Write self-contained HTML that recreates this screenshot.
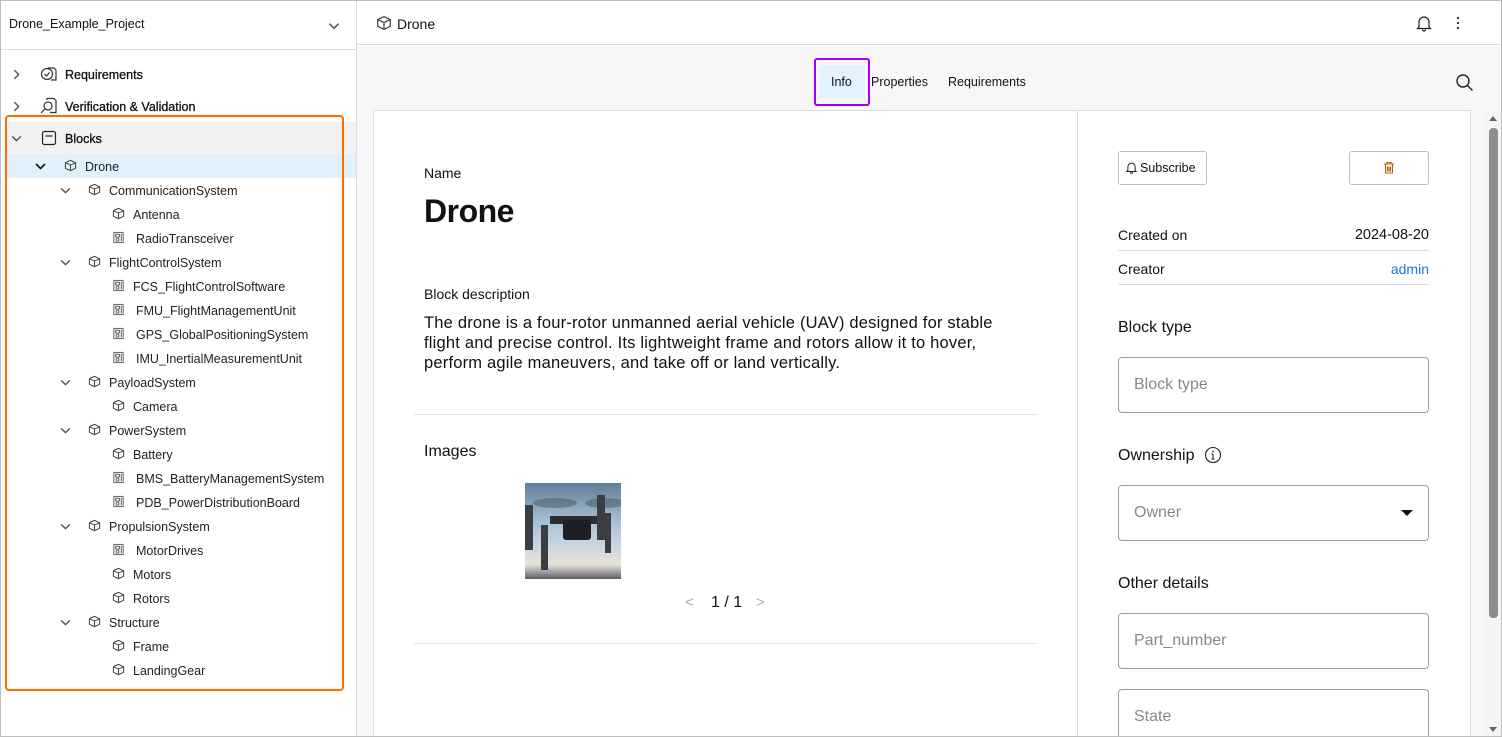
<!DOCTYPE html>
<html><head><meta charset="utf-8"><style>
*{box-sizing:border-box;margin:0;padding:0}
html,body{width:1502px;height:737px;overflow:hidden}
body{font-family:"Liberation Sans",sans-serif;color:#111;background:#fff;position:relative}
.a{position:absolute;white-space:nowrap}
.t{font-size:12.5px;color:#222}
svg{position:absolute}
.in{position:absolute;border:1px solid #9e9e9e;border-radius:4px;background:#fff;color:#888;font-size:16px;padding-left:15px;display:flex;align-items:center}
.r{position:absolute;text-align:right;white-space:nowrap}
</style></head><body>
<svg width="0" height="0" style="position:absolute"><defs>
<symbol id="cube" viewBox="0 0 14 14"><path d="M7 1.5 L12.5 4 V10 L7 12.5 L1.5 10 V4 Z M1.5 4 L7 6.5 L12.5 4 M7 6.5 V12.5" fill="none" stroke="#444" stroke-width="1.1" stroke-linejoin="round"/></symbol>
<symbol id="part" viewBox="0 0 14 14"><rect x="2" y="1.5" width="10" height="11" fill="none" stroke="#555" stroke-width="1"/><rect x="4" y="3.5" width="4" height="3" fill="none" stroke="#555"/><circle cx="6" cy="9.5" r="1.5" fill="none" stroke="#555"/><path d="M10 3v8" stroke="#555"/></symbol>
<symbol id="chd" viewBox="0 0 12 12"><path d="M2 4 L6 8 L10 4" fill="none" stroke="#555" stroke-width="1.3"/></symbol>
<symbol id="chr" viewBox="0 0 12 12"><path d="M4 2 L8 6 L4 10" fill="none" stroke="#555" stroke-width="1.3"/></symbol>
</defs></svg>

<div class="a" style="left:0;top:0;width:1502px;height:737px;overflow:hidden">

<!-- left panel -->
<div class="a" style="left:356px;top:0;width:1px;height:737px;background:#ddd"></div>
<div class="a" style="left:0;top:49px;width:356px;height:1px;background:#ddd"></div>
<div class="a" style="left:9px;top:17px;font-size:12.5px">Drone_Example_Project</div>
<svg style="left:327px;top:19px" width="14" height="14"><use href="#chd"/></svg>

<svg style="left:10px;top:68px" width="13" height="13"><use href="#chr"/></svg>
<svg style="left:40px;top:65px" width="18" height="18" viewBox="0 0 18 18"><circle cx="7" cy="9" r="5.5" fill="none" stroke="#333" stroke-width="1.2"/><path d="M4.5 9l2 2 3-3.5" fill="none" stroke="#333" stroke-width="1.2"/><path d="M8 3h6l2 2v10H11" fill="none" stroke="#333" stroke-width="1.2"/></svg>
<div class="a" style="left:65px;top:68px;font-size:12.5px;color:#111;-webkit-text-stroke:0.3px #111">Requirements</div>
<svg style="left:10px;top:100px" width="13" height="13"><use href="#chr"/></svg>
<svg style="left:40px;top:97px" width="18" height="18" viewBox="0 0 18 18"><circle cx="8" cy="9" r="4" fill="none" stroke="#333" stroke-width="1.2"/><path d="M5 12l-4 4M7 3V1.5h7l2 2v12h-6" fill="none" stroke="#333" stroke-width="1.2"/></svg>
<div class="a" style="left:65px;top:100px;font-size:12.5px;color:#111;-webkit-text-stroke:0.3px #111">Verification &amp; Validation</div>

<div class="a" style="left:7px;top:122px;width:349px;height:32px;background:#f2f2f2"></div>
<div class="a" style="left:7px;top:154px;width:349px;height:24px;background:#e1f0fb"></div>
<svg style="left:10px;top:132px" width="13" height="13"><use href="#chd"/></svg>
<svg style="left:41px;top:130px" width="16" height="16" viewBox="0 0 16 16"><rect x="1.5" y="1.5" width="13" height="13" rx="2" fill="none" stroke="#222" stroke-width="1.2"/><path d="M4.5 6h7" stroke="#222" stroke-width="1.2"/></svg>
<div class="a" style="left:65px;top:132px;font-size:12.5px;color:#111;-webkit-text-stroke:0.3px #111">Blocks</div>

<svg style="left:34px;top:160px" width="13" height="13"><path d="M2 4 L6.5 8.5 L11 4" fill="none" stroke="#111" stroke-width="1.6"/></svg>
<svg style="left:64px;top:159px" width="13" height="13"><use href="#cube"/></svg>
<div class="a t" style="left:85px;top:160px">Drone</div>

<!-- main header -->
<div class="a" style="left:357px;top:0;width:1145px;height:45px;background:#fff;border-bottom:1px solid #ddd"></div>
<svg style="left:376px;top:15px" width="16" height="16"><use href="#cube"/></svg>
<div class="a" style="left:397px;top:16px;font-size:14px">Drone</div>
<svg style="left:1415px;top:14px" width="18" height="18" viewBox="0 0 18 18"><path d="M4 13V8a5 5 0 0 1 10 0v5l1.5 1.5h-13z M7.5 15.5a1.5 1.5 0 0 0 3 0" fill="none" stroke="#222" stroke-width="1.2"/></svg>
<div class="a" style="left:1457px;top:17px;width:2px;height:2px;background:#333;box-shadow:0 5px #333,0 10px #333"></div>

<div class="a" style="left:357px;top:46px;width:1145px;height:691px;background:#f7f7f9"></div>
<div class="a" style="left:818px;top:65px;width:47px;height:33px;background:#e3f2fd"></div>
<div class="a" style="left:814px;top:58px;width:56px;height:48px;border:2px solid #a100ff;border-radius:3px"></div>
<div class="a" style="left:831px;top:75px;font-size:12.5px">Info</div>
<div class="a" style="left:871px;top:75px;font-size:12.5px">Properties</div>
<div class="a" style="left:948px;top:75px;font-size:12.5px">Requirements</div>
<svg style="left:1455px;top:73px" width="20" height="20" viewBox="0 0 20 20"><circle cx="8" cy="8" r="6" fill="none" stroke="#222" stroke-width="1.4"/><path d="M12.5 12.5l5 5" stroke="#222" stroke-width="1.4"/></svg>

<!-- card -->
<div class="a" style="left:373px;top:110px;width:1098px;height:627px;background:#fff;border:1px solid #ddd;border-bottom:none"></div>
<div class="a" style="left:1077px;top:110px;width:1px;height:627px;background:#ddd"></div>
<!-- scrollbar -->
<div class="a" style="left:1485px;top:110px;width:16px;height:627px;background:#f5f5f5"></div>
<div class="a" style="left:1489px;top:128px;width:9px;height:490px;background:#8d8d8d;border-radius:4px"></div>
<svg style="left:1488px;top:114px" width="10" height="8"><path d="M1 7L5 2L9 7Z" fill="#666"/></svg>
<svg style="left:1488px;top:726px" width="10" height="8"><path d="M1 1L5 6L9 1Z" fill="#666"/></svg>

<div class="a" style="left:424px;top:165px;font-size:14px">Name</div>
<div class="a" style="left:424px;top:193px;font-size:32px;font-weight:bold;letter-spacing:-0.5px">Drone</div>
<div class="a" style="left:424px;top:286px;font-size:14px">Block description</div>
<div class="a" style="left:424px;top:313px;font-size:16.5px;line-height:20px;letter-spacing:0.2px">The drone is a four-rotor unmanned aerial vehicle (UAV) designed for stable<br>flight and precise control. Its lightweight frame and rotors allow it to hover,<br>perform agile maneuvers, and take off or land vertically.</div>
<div class="a" style="left:414px;top:414px;width:623px;height:1px;background:#e0e0e0"></div>
<div class="a" style="left:424px;top:443px;font-size:16px">Images</div>
<div class="a" style="left:525px;top:483px;width:96px;height:96px;background:linear-gradient(180deg,#5d7d98 0%,#a9c0d4 40%,#c9d6e0 65%,#e8e2d8 85%,#5a5f68 100%)"></div>
<svg style="left:525px;top:483px" width="96" height="96"><ellipse cx="30" cy="20" rx="22" ry="5" fill="#4a5560" opacity=".5"/><ellipse cx="80" cy="20" rx="20" ry="5" fill="#4a5560" opacity=".5"/><rect x="25" y="33" width="55" height="8" fill="#2a2d31"/><rect x="38" y="37" width="28" height="20" rx="3" fill="#1e2124"/><rect x="72" y="12" width="8" height="45" fill="#3a3e44"/><rect x="0" y="22" width="8" height="45" fill="#3a3e44"/><rect x="16" y="42" width="7" height="45" fill="#3a3e44"/><rect x="80" y="30" width="6" height="40" fill="#3a3e44"/></svg>
<div class="a" style="left:685px;top:594px;font-size:15px;color:#aaa">&lt;</div>
<div class="a" style="left:711px;top:594px;font-size:16px">1 / 1</div>
<div class="a" style="left:756px;top:594px;font-size:15px;color:#aaa">&gt;</div>
<div class="a" style="left:414px;top:643px;width:623px;height:1px;background:#e0e0e0"></div>

<!-- right column -->
<div class="a" style="left:1118px;top:151px;width:89px;height:34px;border:1px solid #bbb;border-radius:3px"></div>
<svg style="left:1125px;top:161px" width="13" height="13" viewBox="0 0 18 18"><path d="M4 13V8a5 5 0 0 1 10 0v5l1.5 1.5h-13z M7.5 15.5a1.5 1.5 0 0 0 3 0" fill="none" stroke="#222" stroke-width="1.4"/></svg>
<div class="a" style="left:1140px;top:161px;font-size:12.5px">Subscribe</div>
<div class="a" style="left:1349px;top:151px;width:80px;height:34px;border:1px solid #bbb;border-radius:3px"></div>
<svg style="left:1383px;top:161px" width="12" height="13" viewBox="0 0 12 13"><path d="M1 3h10M4 3V1.5h4V3M2.5 3.5v8.5h7V3.5M4.5 5.5v5M6 5.5v5M7.5 5.5v5" fill="none" stroke="#b85c00" stroke-width="1.1"/></svg>
<div class="a" style="left:1118px;top:227px;font-size:14px">Created on</div>
<div class="r" style="right:73px;top:227px;font-size:14.5px">2024-08-20</div>
<div class="a" style="left:1118px;top:250px;width:311px;height:1px;background:#ddd"></div>
<div class="a" style="left:1118px;top:261px;font-size:14px">Creator</div>
<div class="r" style="right:73px;top:261px;font-size:14px;color:#1a73e8">admin</div>
<div class="a" style="left:1118px;top:284px;width:311px;height:1px;background:#ddd"></div>
<div class="a" style="left:1118px;top:319px;font-size:16px">Block type</div>
<div class="in" style="left:1118px;top:357px;width:311px;height:56px">Block type</div>
<div class="a" style="left:1118px;top:447px;font-size:16px">Ownership</div>
<svg style="left:1204px;top:446px" width="18" height="18" viewBox="0 0 18 18"><circle cx="9" cy="9" r="7.5" fill="none" stroke="#222" stroke-width="1.1"/><path d="M9 8v5M7.5 13h3M7.5 8H9" stroke="#222" stroke-width="1.1"/><circle cx="9" cy="5.5" r=".9" fill="#222"/></svg>
<div class="in" style="left:1118px;top:485px;width:311px;height:56px">Owner</div>
<svg style="left:1401px;top:510px" width="12" height="8"><path d="M0 0h12L6 6z" fill="#111"/></svg>
<div class="a" style="left:1118px;top:575px;font-size:16px">Other details</div>
<div class="in" style="left:1118px;top:613px;width:311px;height:56px">Part_number</div>
<div class="in" style="left:1118px;top:689px;width:311px;height:56px">State</div>

<!-- tree rows -->
<svg style="left:59px;top:184px" width="13" height="13"><use href="#chd"/></svg><svg style="left:88px;top:183px" width="13" height="13"><use href="#cube"/></svg><div class="a t" style="left:109px;top:184px">CommunicationSystem</div>
<svg style="left:112px;top:207px" width="13" height="13"><use href="#cube"/></svg><div class="a t" style="left:133px;top:208px">Antenna</div>
<svg style="left:112px;top:231px" width="13" height="13"><use href="#part"/></svg><div class="a t" style="left:136px;top:232px">RadioTransceiver</div>
<svg style="left:59px;top:256px" width="13" height="13"><use href="#chd"/></svg><svg style="left:88px;top:255px" width="13" height="13"><use href="#cube"/></svg><div class="a t" style="left:109px;top:256px">FlightControlSystem</div>
<svg style="left:112px;top:279px" width="13" height="13"><use href="#part"/></svg><div class="a t" style="left:133px;top:280px">FCS_FlightControlSoftware</div>
<svg style="left:112px;top:303px" width="13" height="13"><use href="#part"/></svg><div class="a t" style="left:136px;top:304px">FMU_FlightManagementUnit</div>
<svg style="left:112px;top:327px" width="13" height="13"><use href="#part"/></svg><div class="a t" style="left:136px;top:328px">GPS_GlobalPositioningSystem</div>
<svg style="left:112px;top:351px" width="13" height="13"><use href="#part"/></svg><div class="a t" style="left:136px;top:352px">IMU_InertialMeasurementUnit</div>
<svg style="left:59px;top:376px" width="13" height="13"><use href="#chd"/></svg><svg style="left:88px;top:375px" width="13" height="13"><use href="#cube"/></svg><div class="a t" style="left:109px;top:376px">PayloadSystem</div>
<svg style="left:112px;top:399px" width="13" height="13"><use href="#cube"/></svg><div class="a t" style="left:133px;top:400px">Camera</div>
<svg style="left:59px;top:424px" width="13" height="13"><use href="#chd"/></svg><svg style="left:88px;top:423px" width="13" height="13"><use href="#cube"/></svg><div class="a t" style="left:109px;top:424px">PowerSystem</div>
<svg style="left:112px;top:447px" width="13" height="13"><use href="#cube"/></svg><div class="a t" style="left:133px;top:448px">Battery</div>
<svg style="left:112px;top:471px" width="13" height="13"><use href="#part"/></svg><div class="a t" style="left:136px;top:472px">BMS_BatteryManagementSystem</div>
<svg style="left:112px;top:495px" width="13" height="13"><use href="#part"/></svg><div class="a t" style="left:136px;top:496px">PDB_PowerDistributionBoard</div>
<svg style="left:59px;top:520px" width="13" height="13"><use href="#chd"/></svg><svg style="left:88px;top:519px" width="13" height="13"><use href="#cube"/></svg><div class="a t" style="left:109px;top:520px">PropulsionSystem</div>
<svg style="left:112px;top:543px" width="13" height="13"><use href="#part"/></svg><div class="a t" style="left:136px;top:544px">MotorDrives</div>
<svg style="left:112px;top:567px" width="13" height="13"><use href="#cube"/></svg><div class="a t" style="left:133px;top:568px">Motors</div>
<svg style="left:112px;top:591px" width="13" height="13"><use href="#cube"/></svg><div class="a t" style="left:133px;top:592px">Rotors</div>
<svg style="left:59px;top:616px" width="13" height="13"><use href="#chd"/></svg><svg style="left:88px;top:615px" width="13" height="13"><use href="#cube"/></svg><div class="a t" style="left:109px;top:616px">Structure</div>
<svg style="left:112px;top:639px" width="13" height="13"><use href="#cube"/></svg><div class="a t" style="left:133px;top:640px">Frame</div>
<svg style="left:112px;top:663px" width="13" height="13"><use href="#cube"/></svg><div class="a t" style="left:133px;top:664px">LandingGear</div>

<div class="a" style="left:5px;top:115px;width:339px;height:576px;border:2px solid #ff6d00;border-radius:4px"></div>
</div>
<div class="a" style="left:0;top:0;width:1502px;height:737px;border:1px solid #bdbdbd"></div>
</body></html>
